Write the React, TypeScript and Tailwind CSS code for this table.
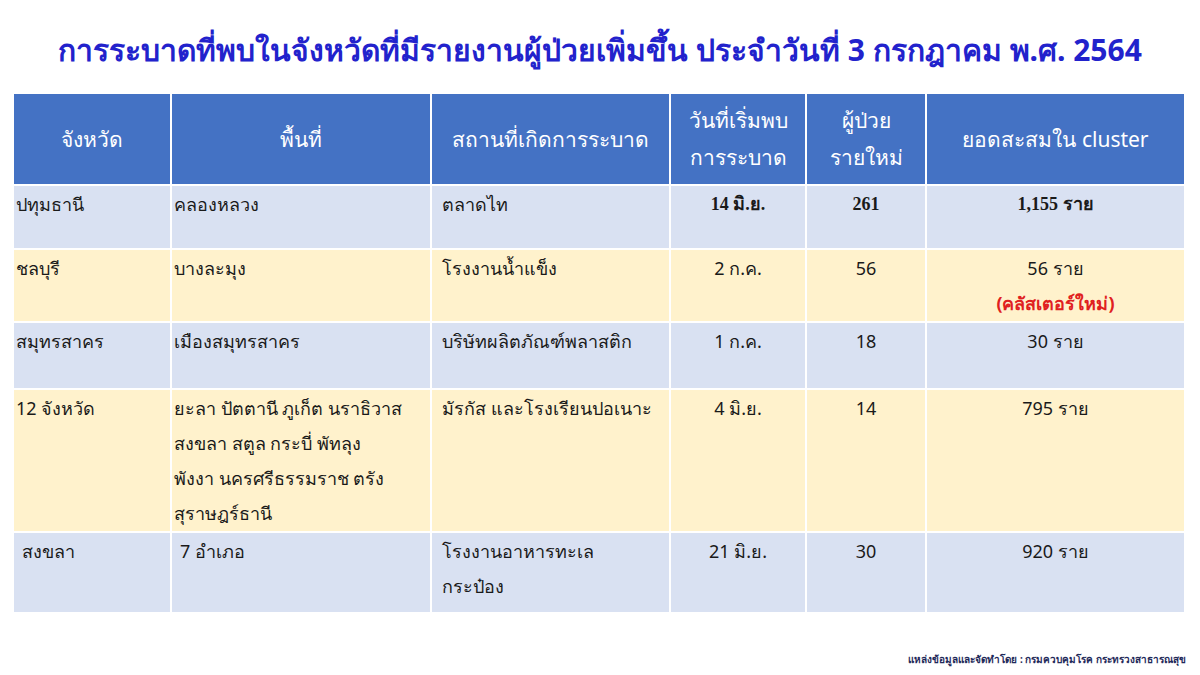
import React from 'react';

type Row = {
  province: string;
  area: string[];
  place: string[];
  date: string;
  cases: string;
  total: string;
  note?: string;
  tone: 'blue' | 'yellow';
  height: string;
  indent?: boolean;
  serif?: boolean;
};

const rows: Row[] = [
  {
    province: 'ปทุมธานี',
    area: ['คลองหลวง'],
    place: ['ตลาดไท'],
    date: '14 มิ.ย.',
    cases: '261',
    total: '1,155 ราย',
    tone: 'blue',
    height: 'h-[64px]',
    serif: true,
  },
  {
    province: 'ชลบุรี',
    area: ['บางละมุง'],
    place: ['โรงงานน้ำแข็ง'],
    date: '2 ก.ค.',
    cases: '56',
    total: '56 ราย',
    note: '(คลัสเตอร์ใหม่)',
    tone: 'yellow',
    height: 'h-[71px]',
  },
  {
    province: 'สมุทรสาคร',
    area: ['เมืองสมุทรสาคร'],
    place: ['บริษัทผลิตภัณฑ์พลาสติก'],
    date: '1 ก.ค.',
    cases: '18',
    total: '30 ราย',
    tone: 'blue',
    height: 'h-[67px]',
  },
  {
    province: '12 จังหวัด',
    area: ['ยะลา ปัตตานี ภูเก็ต นราธิวาส', 'สงขลา สตูล กระบี่ พัทลุง', 'พังงา นครศรีธรรมราช ตรัง', 'สุราษฎร์ธานี'],
    place: ['มัรกัส และโรงเรียนปอเนาะ'],
    date: '4 มิ.ย.',
    cases: '14',
    total: '795 ราย',
    tone: 'yellow',
    height: 'h-[142px]',
  },
  {
    province: 'สงขลา',
    area: ['7 อำเภอ'],
    place: ['โรงงานอาหารทะเล', 'กระป๋อง'],
    date: '21 มิ.ย.',
    cases: '30',
    total: '920 ราย',
    tone: 'blue',
    height: 'h-[81px]',
    indent: true,
  },
];

const cellBase = 'border-[2px] border-white align-top text-[18px] leading-[35px] text-[#1a1a1a]';
const headBase = 'border-[2px] border-white font-normal';

export default function App() {
  return (
    <div className="w-[1200px] h-[675px] bg-white font-['Noto_Sans','Liberation_Sans',sans-serif] overflow-hidden">
      <h1 className="pt-[28px] text-center text-[30px] font-bold text-[#2222cc] leading-[44px]">
        การระบาดที่พบในจังหวัดที่มีรายงานผู้ป่วยเพิ่มขึ้น ประจำวันที่ 3 กรกฎาคม พ.ศ. 2564
      </h1>

      <table className="mt-[20px] ml-[12px] w-[1172px] border-collapse table-fixed">
        <colgroup>
          <col className="w-[158px]" />
          <col className="w-[260px]" />
          <col className="w-[239px]" />
          <col className="w-[136px]" />
          <col className="w-[120px]" />
          <col className="w-[259px]" />
        </colgroup>
        <thead>
          <tr className="h-[92px] bg-[#4472c4] text-white text-[21px] leading-[37px]">
            <th className={headBase}>จังหวัด</th>
            <th className={headBase}>พื้นที่</th>
            <th className={headBase}>สถานที่เกิดการระบาด</th>
            <th className={headBase}>
              วันที่เริ่มพบ
              <br />
              การระบาด
            </th>
            <th className={headBase}>
              ผู้ป่วย
              <br />
              รายใหม่
            </th>
            <th className={headBase}>ยอดสะสมใน cluster</th>
          </tr>
        </thead>
        <tbody>
          {rows.map((r) => {
            const bg = r.tone === 'blue' ? 'bg-[#d9e1f2]' : 'bg-[#fff2cc]';
            const num = r.serif ? "font-['Liberation_Serif',serif] font-bold" : '';
            return (
              <tr key={r.province} className={`${bg} ${r.height}`}>
                <td className={`${cellBase} ${r.indent ? 'pl-[8px]' : 'pl-[2px]'} pt-[1px]`}>{r.province}</td>
                <td className={`${cellBase} ${r.indent ? 'pl-[8px]' : 'pl-[2px]'} pt-[1px]`}>
                  {r.area.map((a) => (
                    <div key={a}>{a}</div>
                  ))}
                </td>
                <td className={`${cellBase} pl-[10px] pt-[1px]`}>
                  {r.place.map((p) => (
                    <div key={p}>{p}</div>
                  ))}
                </td>
                <td className={`${cellBase} ${num} text-center pt-[1px]`}>{r.date}</td>
                <td className={`${cellBase} ${num} text-center pt-[1px]`}>{r.cases}</td>
                <td className={`${cellBase} text-center pt-[1px]`}>
                  <div className={num}>{r.total}</div>
                  {r.note && <div className="text-[#e02020] font-bold">{r.note}</div>}
                </td>
              </tr>
            );
          })}
        </tbody>
      </table>

      <div className="mt-[38px] pr-[14px] text-right text-[10px] font-bold text-[#1f2a5a]">
        แหล่งข้อมูลและจัดทำโดย : กรมควบคุมโรค กระทรวงสาธารณสุข
      </div>
    </div>
  );
}
